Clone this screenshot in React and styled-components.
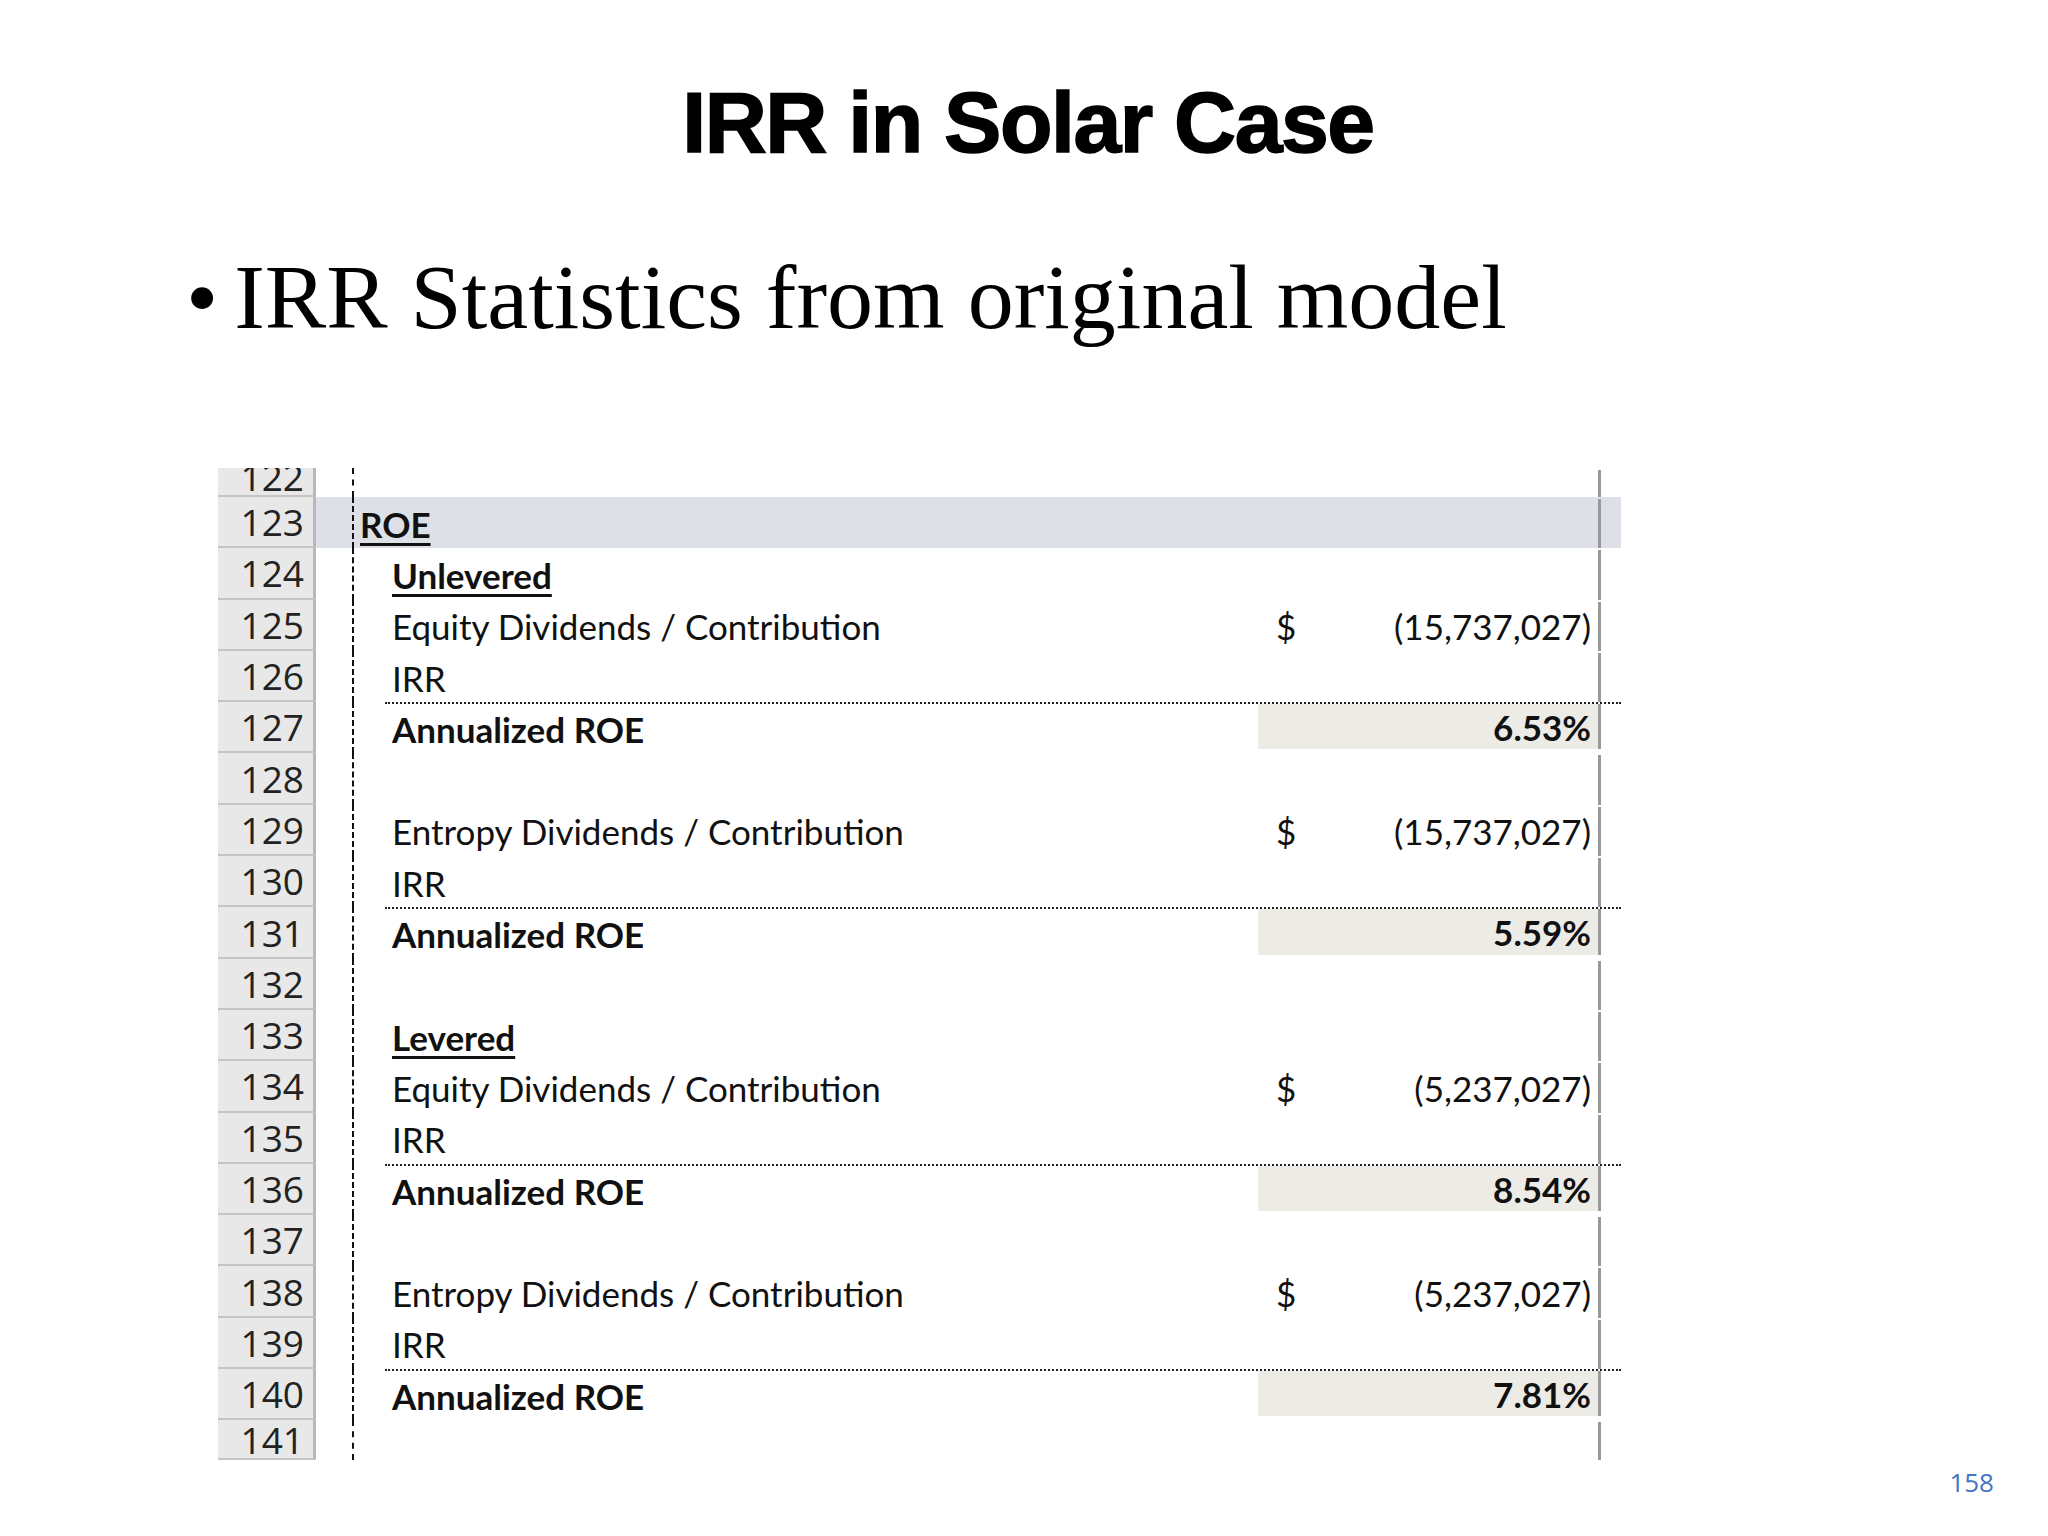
import React from "react";
import styled, { createGlobalStyle } from "styled-components";

const Global = createGlobalStyle`
  html, body { margin: 0; padding: 0; background: #fff; }
  body { width: 2048px; height: 1536px; overflow: hidden; }
`;

const Page = styled.div`
  position: relative;
  width: 2048px;
  height: 1536px;
  box-sizing: border-box;
  padding-top: 72px;
`;

const Title = styled.h1`
  margin: 0;
  text-align: center;
  padding-left: 8px;
  font-family: "Liberation Sans", Arial, sans-serif;
  font-weight: 700;
  font-size: 86px;
  line-height: 100px;
  color: #000;
  letter-spacing: -1.5px;
  -webkit-text-stroke: 1.5px #000;
`;

const Bullet = styled.div`
  margin: 70px 0 0 186px;
  display: flex;
  gap: 16px;
  font-family: "Liberation Serif", "Times New Roman", serif;
  font-size: 92px;
  line-height: 110px;
  color: #000;
`;

const Sheet = styled.div`
  margin: 116px 0 0 218px;
  width: 1403px;
  font-family: Lato, "Open Sans", sans-serif;
  font-size: 35px;
  color: #111;
`;

const Row = styled.div`
  display: flex;
  height: ${p => p.h || 51.3}px;
  overflow: hidden;
`;

const Gutter = styled.div`
  width: 98px;
  flex: none;
  box-sizing: border-box;
  background: #e8e8e8;
  border-right: 3px solid #b8b8b8;
  border-bottom: 2px solid #c4c4c4;
  display: flex;
  align-items: ${p => (p.top ? "flex-end" : "center")};
  justify-content: flex-end;
  padding-right: 9px;
  font-family: "Open Sans", sans-serif;
  font-size: 37px;
  color: #222;
  line-height: 1;
`;

const Spacer = styled.div`
  width: 36px;
  flex: none;
  background: ${p => (p.band ? "#dde1e7" : "transparent")};
`;

const Main = styled.div`
  flex: 1;
  display: flex;
  border-left: 2px dashed #111;
  padding: 0 0 0 31px;
  background: ${p => (p.band ? "#dde1e7" : "transparent")};
`;

const Inner = styled.div`
  flex: 1;
  display: flex;
  border-top: ${p => (p.dotted ? "2px dotted #222" : "2px solid transparent")};
`;

const Label = styled.div`
  flex: 1;
  display: flex;
  align-items: center;
  padding-left: 7px;
  margin-left: ${p => (p.out ? -32 : 0)}px;
  font-weight: ${p => (p.bold ? 700 : 400)};
  span {
    text-decoration: ${p => (p.under ? "underline" : "none")};
    text-decoration-thickness: 3px;
    text-underline-offset: 5px;
  }
`;

const Value = styled.div`
  width: 343px;
  flex: none;
  box-sizing: border-box;
  border-right: 3px solid #999;
  display: flex;
  align-items: center;
  justify-content: space-between;
  padding: 0 7px 0 18px;
  margin-bottom: ${p => (p.shade ? 4 : 0)}px;
  background: ${p => (p.shade ? "#ecebe6" : "transparent")};
  font-weight: ${p => (p.shade ? 700 : 400)};
`;

const Tail = styled.div`
  width: 20px;
  flex: none;
`;

const PageNum = styled.div`
  position: absolute;
  right: 54px;
  bottom: 36px;
  font-family: "Open Sans", sans-serif;
  font-size: 26px;
  color: #4472c4;
`;

const rows = [
  { n: 122, h: 29, top: true },
  { n: 123, label: "ROE", bold: true, under: true, out: true, band: true },
  { n: 124, label: "Unlevered", bold: true, under: true },
  { n: 125, label: "Equity Dividends / Contribution", val: "(15,737,027)" },
  { n: 126, label: "IRR" },
  { n: 127, label: "Annualized ROE", bold: true, dotted: true, pct: "6.53%" },
  { n: 128 },
  { n: 129, label: "Entropy Dividends / Contribution", val: "(15,737,027)" },
  { n: 130, label: "IRR" },
  { n: 131, label: "Annualized ROE", bold: true, dotted: true, pct: "5.59%" },
  { n: 132 },
  { n: 133, label: "Levered", bold: true, under: true },
  { n: 134, label: "Equity Dividends / Contribution", val: "(5,237,027)" },
  { n: 135, label: "IRR" },
  { n: 136, label: "Annualized ROE", bold: true, dotted: true, pct: "8.54%" },
  { n: 137 },
  { n: 138, label: "Entropy Dividends / Contribution", val: "(5,237,027)" },
  { n: 139, label: "IRR" },
  { n: 140, label: "Annualized ROE", bold: true, dotted: true, pct: "7.81%" },
  { n: 141, h: 40 },
];

export default function App() {
  return (
    <Page>
      <Global />
      <Title>IRR in Solar Case</Title>
      <Bullet>
        <span>•</span>
        <span>IRR Statistics from original model</span>
      </Bullet>
      <Sheet>
        {rows.map(r => (
          <Row key={r.n} h={r.h}>
            <Gutter top={r.top}>{r.n}</Gutter>
            <Spacer band={r.band} />
            <Main band={r.band}>
              <Inner dotted={r.dotted}>
                <Label bold={r.bold} under={r.under} out={r.out}>
                  {r.label && <span>{r.label}</span>}
                </Label>
                <Value shade={!!r.pct}>
                  <span>{r.val ? "$" : ""}</span>
                  <span>{r.val || r.pct || ""}</span>
                </Value>
                <Tail />
              </Inner>
            </Main>
          </Row>
        ))}
      </Sheet>
      <PageNum>158</PageNum>
    </Page>
  );
}
